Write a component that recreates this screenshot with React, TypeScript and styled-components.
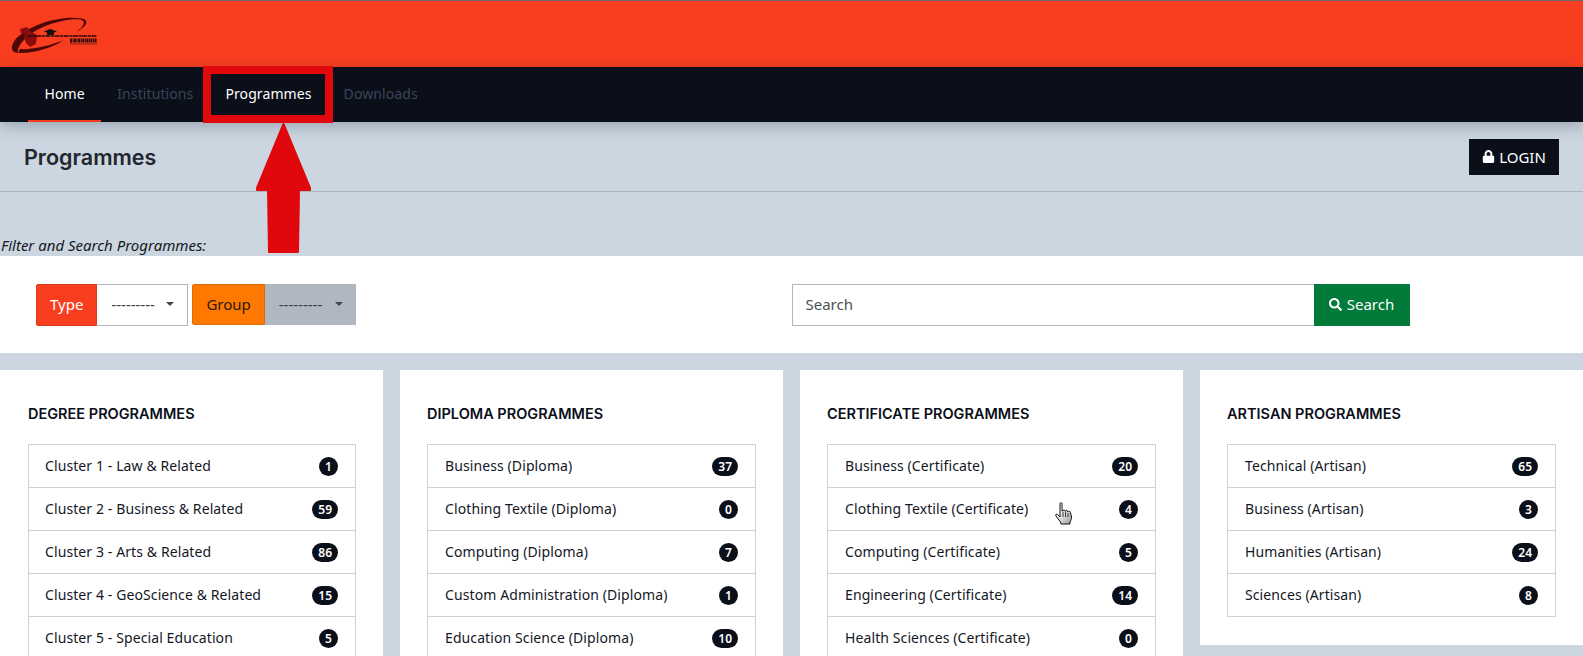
import React from "react";
import styled, { createGlobalStyle } from "styled-components";
import { FaLock, FaSearch } from "react-icons/fa";

const GlobalStyle = createGlobalStyle`
  html, body {
    margin: 0;
    height: 656px;
    overflow: hidden;
    background: #cbd6e0;
    font-family: "Noto Sans", "Open Sans", sans-serif;
    font-size: 14px;
    color: #14171f;
  }
  * { box-sizing: border-box; }
`;

const columns = [
  {
    title: "DEGREE PROGRAMMES",
    rows: [
      ["Cluster 1 - Law & Related", 1],
      ["Cluster 2 - Business & Related", 59],
      ["Cluster 3 - Arts & Related", 86],
      ["Cluster 4 - GeoScience & Related", 15],
      ["Cluster 5 - Special Education", 5],
    ],
  },
  {
    title: "DIPLOMA PROGRAMMES",
    rows: [
      ["Business (Diploma)", 37],
      ["Clothing Textile (Diploma)", 0],
      ["Computing (Diploma)", 7],
      ["Custom Administration (Diploma)", 1],
      ["Education Science (Diploma)", 10],
    ],
  },
  {
    title: "CERTIFICATE PROGRAMMES",
    rows: [
      ["Business (Certificate)", 20],
      ["Clothing Textile (Certificate)", 4],
      ["Computing (Certificate)", 5],
      ["Engineering (Certificate)", 14],
      ["Health Sciences (Certificate)", 0],
    ],
  },
  {
    title: "ARTISAN PROGRAMMES",
    rows: [
      ["Technical (Artisan)", 65],
      ["Business (Artisan)", 3],
      ["Humanities (Artisan)", 24],
      ["Sciences (Artisan)", 8],
    ],
  },
];

function Logo() {
  return (
    <svg width="90" height="46" viewBox="0 0 90 46">
      {/* swoosh, thin at the top right and thick at the bottom left */}
      <path
        d="M72 2.500 C50 -1 18 9 5 24 C0 31 1 37 8 37 C7 33 10 27 18 20 C32 9 56 2 70 3.500 C76 4.500 75 10 66 16 C78 10 79 4 72 2.500 Z"
        fill="#4f0707"
      />
      <path d="M8 37 C22 38 42 32 54 24 C42 29 22 34 10 33 Z" fill="#4f0707" />
      {/* map */}
      <path
        d="M10 13 L17 11 L20 15 L27 19 L26 28 L20 31 L16 27 L14 21 L15 18 L11 17 Z"
        fill="#8a0c0c"
      />
      {/* grad cap */}
      <path d="M34 15.500 L40 13 L47 15.500 L40 18 Z" fill="#111" />
      <path d="M37 17 H44 V19 H37 Z" fill="#111" />
      {/* tiny unreadable lines of the logo */}
      <path d="M17 20 H87" stroke="#2a0a08" strokeWidth="1.600" strokeDasharray="5 0.700 3 0.500" />
      <path d="M60 24.500 H87" stroke="#2a0a08" strokeWidth="4" strokeDasharray="2 0.600 1 0.500" />
      <rect x="60" y="27.500" width="27" height="1" fill="#8a2412" />
    </svg>
  );
}

function HandCursor() {
  return (
    <HandSvg width="18" height="23" viewBox="0 0 18 23">
      <defs>
        <linearGradient id="handFill" x1="0" y1="0" x2="1" y2="1">
          <stop offset="0.3" stopColor="#ffffff" />
          <stop offset="1" stopColor="#9a9a9a" />
        </linearGradient>
      </defs>
      <path
        d="M5 1.500 C5 0.500 7 0.500 7 1.500 L7 9 L8 9 C8 7.500 10 7.500 10 9 L10.500 9.500 C10.500 8 12.500 8 12.500 9.500 L13 10 C13 9 15.500 9 15.500 10.500 L16.500 15 C16.500 17 16 18 15 20 L15 22 L6 22 L5.500 20 L1 14 C0 12.500 1.500 11.500 2.500 12.500 L5 15 Z"
        fill="url(#handFill)"
        stroke="#111"
        strokeWidth="1"
        strokeLinejoin="round"
      />
      <path d="M8 10 V15 M10.500 10 V15 M13 11 V15" stroke="#111" strokeWidth="0.8" />
    </HandSvg>
  );
}

function App() {
  return (
    <Page>
      <GlobalStyle />
      <Banner>
        <Logo />
      </Banner>
      <Nav>
        <NavItem $active>Home</NavItem>
        <NavItem>Institutions</NavItem>
        <NavItem $bright>Programmes</NavItem>
        <NavItem>Downloads</NavItem>
      </Nav>
      <TitleBar>
        <PageTitle>Programmes</PageTitle>
        <LoginButton>
          <FaLock size={13} /> LOGIN
        </LoginButton>
      </TitleBar>
      <FilterLabel>Filter and Search Programmes:</FilterLabel>
      <FilterBand>
        <SelectGroup>
          <Addon $bg="#f93e20" $color="#fff" $border="#d93a20">
            Type
          </Addon>
          <Select>
            ---------
            <Caret />
          </Select>
          <Addon $bg="#ff7900" $color="#2a1a08" $border="#d96a08">
            Group
          </Addon>
          <Select $disabled>
            ---------
            <Caret />
          </Select>
        </SelectGroup>
        <SearchGroup>
          <SearchInput>Search</SearchInput>
          <SearchButton>
            <FaSearch size={13} /> Search
          </SearchButton>
        </SearchGroup>
      </FilterBand>
      <Cards>
        {columns.map((col) => (
          <Card key={col.title}>
            <CardTitle>{col.title}</CardTitle>
            <List>
              {col.rows.map(([name, count]) => (
                <Row key={name}>
                  <RowLabel>{name}</RowLabel>
                  <Badge>{count}</Badge>
                </Row>
              ))}
            </List>
          </Card>
        ))}
      </Cards>
      <Highlight />
      <Arrow width="57" height="132" viewBox="0 0 57 132">
        <path
          d="M28.500 2 L55 66 L55 68 L44 68 L43 130 L14 130 L13 68 L2 68 L2 66 Z"
          fill="#e0070d"
          stroke="#e0070d"
          strokeWidth="2"
          strokeLinejoin="round"
        />
      </Arrow>
      <HandCursor />
    </Page>
  );
}

export default App;

const Page = styled.div`
  position: relative;
  width: 1583px;
  height: 656px;
  overflow: hidden;
`;

const Banner = styled.header`
  height: 67px;
  background: #f93e20;
  border-top: 1px solid #6b6b6b;
  padding: 15px 0 0 10px;
`;

const Nav = styled.nav`
  position: relative;
  z-index: 1;
  height: 55px;
  padding-left: 28px;
  display: flex;
  background: #0b0f19;
  box-shadow: 0 4px 14px rgba(30, 40, 60, 0.28);
`;

const NavItem = styled.a<{ $active?: boolean; $bright?: boolean }>`
  padding: 0 ${(p) => (p.$active ? "16.500px" : "16px")};
  line-height: 54px;
  font-size: 14px;
  letter-spacing: 0.1px;
  color: ${(p) => (p.$active || p.$bright ? "#ffffff" : "#3d4459")};
  border-bottom: 2px solid ${(p) => (p.$active ? "#f93e20" : "transparent")};
`;

const TitleBar = styled.div`
  height: 70px;
  padding: 0 24px;
  display: flex;
  align-items: center;
  justify-content: space-between;
  border-bottom: 1px solid #aeb7bf;
`;

const PageTitle = styled.h1`
  margin: 0;
  font-family: Inter, "Noto Sans", sans-serif;
  font-size: 21.500px;
  font-weight: 600;
  color: #23262d;
`;

const LoginButton = styled.button`
  width: 90px;
  height: 36px;
  padding: 0;
  border: 0;
  background: #0b0f19;
  color: #fff;
  font: 15px "Noto Sans", sans-serif;
  display: flex;
  align-items: center;
  justify-content: center;
  gap: 4px;
`;

const FilterLabel = styled.div`
  height: 64px;
  padding: 0 0 1px 1px;
  display: flex;
  align-items: flex-end;
  font-size: 15px;
  font-style: italic;
  line-height: 19px;
  color: #16181d;
`;

const FilterBand = styled.section`
  height: 97px;
  padding: 28px 0 0 36px;
  background: #fff;
  display: grid;
  grid-template-columns: 755.500px 619px;
`;

const SelectGroup = styled.div`
  display: flex;
  height: 42px;
`;

const Addon = styled.div<{ $bg: string; $color: string; $border: string }>`
  padding: 0 13px 2px;
  display: flex;
  align-items: center;
  font-size: 15px;
  background: ${(p) => p.$bg};
  color: ${(p) => p.$color};
  border: 1px solid ${(p) => p.$border};
  border-radius: 2px 0 0 2px;
  &:nth-child(3) {
    margin-left: 4px;
    height: 41px;
  }
`;

const Select = styled.div<{ $disabled?: boolean }>`
  flex: none;
  width: 91px;
  height: ${(p) => (p.$disabled ? "41px" : "42px")};
  padding: 0 13px 2px 14px;
  display: flex;
  align-items: center;
  justify-content: space-between;
  font-size: 15px;
  color: #3a3d44;
  background: ${(p) => (p.$disabled ? "#b0b7c0" : "#ffffff")};
  border: ${(p) => (p.$disabled ? "0" : "1px solid #b0b7c0")};
  border-left: 0;
`;

const Caret = styled.span`
  width: 0;
  height: 0;
  border-left: 4px solid transparent;
  border-right: 4px solid transparent;
  border-top: 4px solid #444;
`;

const SearchGroup = styled.div`
  display: flex;
  height: 42px;
`;

const SearchInput = styled.div`
  width: 523px;
  padding: 0 13px 2px;
  display: flex;
  align-items: center;
  font-size: 15px;
  color: #4b4f57;
  background: #fff;
  border: 1px solid #b0b7c0;
`;

const SearchButton = styled.button`
  width: 96px;
  margin-left: -1px;
  padding: 0 0 2px;
  border: 0;
  background: #027a3a;
  color: #fff;
  font: 15px "Noto Sans", sans-serif;
  display: flex;
  align-items: center;
  justify-content: center;
  gap: 5px;
`;

const Cards = styled.main`
  padding-top: 17px;
  display: grid;
  grid-template-columns: repeat(4, 383px);
  column-gap: 17px;
  align-items: start;
`;

const CardTitle = styled.h2`
  margin: 0;
  height: 74px;
  padding-top: 34px;
  font-family: Inter, "Noto Sans", sans-serif;
  font-size: 14.500px;
  line-height: 20px;
  font-weight: 600;
  color: #0b0f19;
`;

const List = styled.ul`
  margin: 0;
  padding: 0;
  list-style: none;
  border: 1px solid #ced0d4;
  border-bottom: 0;
`;

const Row = styled.li`
  height: 43px;
  padding: 0 17px 0 17px;
  display: flex;
  align-items: center;
  justify-content: space-between;
  font-size: 14px;
  color: #14171f;
  border-bottom: 1px solid #ced0d4;
`;

const RowLabel = styled.span`
  padding-bottom: 2px;
  letter-spacing: 0.1px;
`;

const Card = styled.article`
  padding: 0 27px 28px 27px;
  background: #fff;
  &:first-child {
    padding-left: 28px;
    ${Row} {
      padding-left: 16px;
    }
  }
`;

const Badge = styled.span`
  min-width: 19px;
  height: 19px;
  padding: 0 6px;
  border-radius: 10px;
  background: #0b0f19;
  color: #fff;
  font-size: 12px;
  font-weight: 600;
  line-height: 19px;
  text-align: center;
`;

const Highlight = styled.div`
  position: absolute;
  left: 203px;
  top: 66px;
  width: 130px;
  height: 57px;
  z-index: 2;
  border: 8px solid #e0070d;
`;

const Arrow = styled.svg`
  position: absolute;
  left: 255px;
  top: 122px;
  z-index: 2;
`;

const HandSvg = styled.svg`
  position: absolute;
  left: 1055px;
  top: 502px;
  z-index: 3;
`;
